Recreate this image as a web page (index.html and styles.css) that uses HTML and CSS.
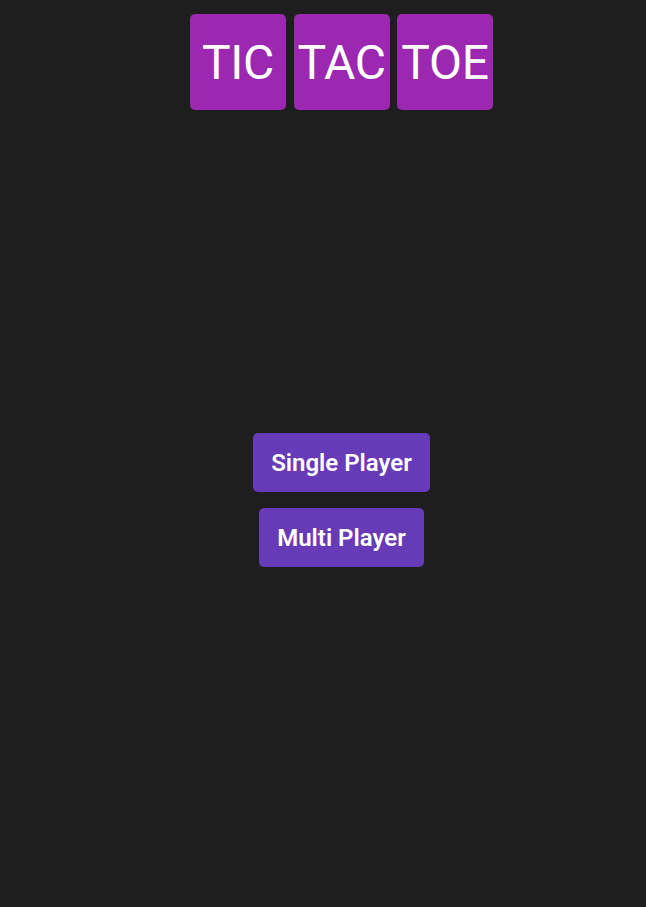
FILE: index.html
```html
<!DOCTYPE html>
<html>
<head>
<meta charset="utf-8">
<link rel="stylesheet" href="styles.css">
</head>
<body>
<div class="app">
  <div class="title">
    <div class="tile">TIC</div>
    <div class="tile">TAC</div>
    <div class="tile">TOE</div>
  </div>
  <div class="menu">
    <button class="btn">Single Player</button>
    <button class="btn">Multi Player</button>
  </div>
</div>
</body>
</html>
```
FILE: styles.css
```css
html, body {
  margin: 0;
  padding: 0;
  background: #1e1e1e;
  height: 100%;
}
.app {
  box-sizing: border-box;
  height: 100%;
  padding-left: 37px;
  display: flex;
  flex-direction: column;
  align-items: center;
  font-family: Roboto, "Liberation Sans", sans-serif;
}
.title {
  display: flex;
  gap: 7.5px;
  margin-top: 14px;
}
.tile {
  width: 96px;
  height: 96px;
  background: #9c27b0;
  border-radius: 5px;
  color: #fff;
  font-size: 48px;
  display: flex;
  align-items: center;
  justify-content: center;
  letter-spacing: -0.3px;
}
.menu {
  margin-top: 323px;
  display: flex;
  flex-direction: column;
  align-items: center;
  gap: 16px;
}
.btn {
  height: 59px;
  padding: 0 18px;
  border: none;
  border-radius: 5px;
  background: #673ab7;
  color: #fff;
  font-family: Roboto, "Liberation Sans", sans-serif;
  font-weight: 600;
  font-size: 24px;
}
```
